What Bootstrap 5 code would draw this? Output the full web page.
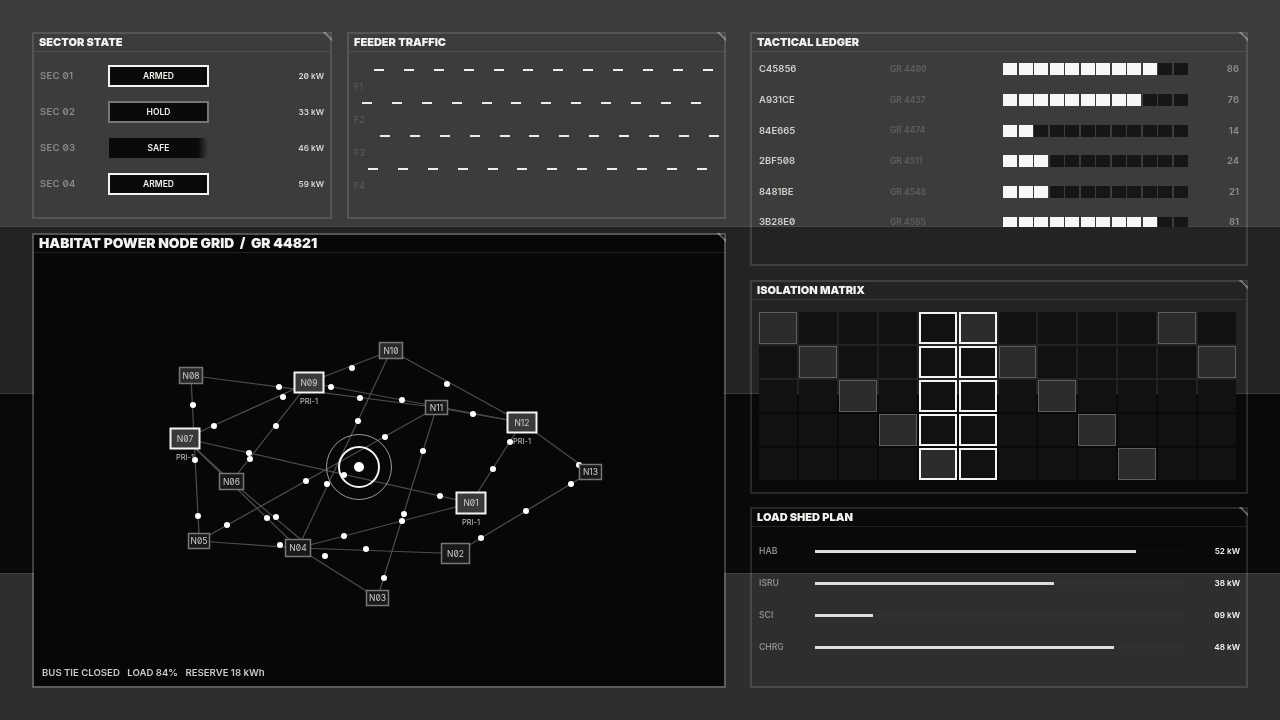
<!DOCTYPE html>
<html lang="en"><head><meta charset="utf-8"><title>Habitat Power Node Grid</title>
<link href="https://cdn.jsdelivr.net/npm/bootstrap@5.3.0/dist/css/bootstrap.min.css" rel="stylesheet">
<style>
html,body{height:720px;overflow:hidden}
body{font-family:Inter,"Liberation Sans",sans-serif;font-variant-numeric:slashed-zero;color:#f2f2f0;
background:linear-gradient(180deg,#3c3d3b 0 226px,#4a4b49 226px 227px,#232422 227px 393px,#3a3b39 393px 394px,#090a08 394px 573px,#3f403e 573px 574px,#2e2f2d 574px 720px)}
.hud{width:1216px;height:656px;margin:32px 32px 0;gap:24px;will-change:transform}
.hud-left{width:694px;gap:14px}
.hud-right{width:498px;gap:14px}
.hud-top{height:187px;gap:15px}
.pane{position:relative;border:2px solid rgba(255,255,255,.13);display:flex;flex-direction:column;min-height:0}
.pane::after{content:"";position:absolute;top:-2px;right:-2px;width:9px;height:9px;background:linear-gradient(45deg,transparent 0 46%,rgba(255,255,255,.3) 46% 62%,transparent 62%)}
.pane-dark{background:#060706;background-clip:padding-box;border-color:rgba(255,255,255,.22)}
.pane-head{height:18px;padding:0 5px;border-bottom:1px solid rgba(255,255,255,.1);font-size:11px;line-height:17px;font-weight:900;white-space:nowrap;flex:none}
.pane-head-lg{font-size:13.8px}
.w-sector{width:300px}.w-feed{width:379px}
.sector-body{padding:6px 6px 0}
.sector-row{height:36px;font-size:8.2px;font-weight:600}
.sec-name{width:68px;color:#8b8c8a;font-size:9.5px;letter-spacing:.3px}
.sec-state{width:101px;height:22px;background:#0a0b09;border:2px solid #0a0b09;text-align:center;font-size:8.5px;line-height:18px;font-weight:600;color:#efefed}
.st-armed{border-color:#f4f4f2}
.st-hold{border-color:#777876}
.st-safe{background:linear-gradient(90deg,#0a0b09 90%,#3c3d3b);background-clip:padding-box;border:1px solid transparent;line-height:20px}
.sec-val{margin-left:auto;color:#d6d6d4}
.feed-body{padding:16.5px 5px 0}
.lane{height:33.3px}
.dash{height:2px;background:repeating-linear-gradient(90deg,#ececea 0 10px,transparent 10px 29.9px)}
.lane-lbl{font-size:9px;line-height:10px;color:#5c5d5b;margin-top:11px}
.ledger-body{height:175px;overflow:hidden;padding:2px 7px 0;flex:none}
.led-row{height:30.67px;font-size:9.5px;font-weight:600;flex:none}
.led-id{width:131px;color:#cfcfcd}
.led-gr{width:113px;color:#5f605e;font-size:8.5px}
.led-cells{gap:1.55px}
.led-cell{width:14px;height:12px;background:#161715}
.led-on{background:#f7f7f5}
.led-val{margin-left:auto;color:#8d8e8c}
.w-ledger{height:234px}.w-matrix{height:214px;margin-bottom:-1px}
.matrix{display:grid;grid-template-columns:repeat(12,1fr);grid-auto-rows:32px;gap:2px;padding:12px 10px 0 7px}
.mx{background:#111210;border:1px solid transparent}
.mx-g{background:#2c2d2b;border:1px solid #5f605e}
.mx-w{border:2px solid #f4f4f2}
.mx-wf{background:#2c2d2b}
.load-body{padding:8px 6px 0 7px}
.load-row{height:32px;font-size:8.2px;font-weight:600;line-height:12px}
.load-name{width:56px;color:#8b8c8a;font-size:8.6px}
.load-track{width:367px;height:3px;background:rgba(255,255,255,.02)}
.load-fill{height:3px;background:#dededc}
.load-val{margin-left:auto;color:#f2f2f0}
.map-wrap{flex:1;min-height:0}
.map-wrap svg{display:block}
.map-foot{font-size:9.6px;line-height:12px;font-weight:600;color:#c9c9c7;padding:0 8px 7px;gap:7.5px;white-space:nowrap}
svg text{font-family:Inter,"Liberation Sans",sans-serif;font-variant-numeric:slashed-zero}
.ln{stroke:#4d4e4c;stroke-width:1.2;fill:none}
.nd{fill:#191a18;stroke:#777876;stroke-width:1.5}
.nd-p{fill:#3a3b39;stroke:#f4f4f2;stroke-width:2}
.nd-m{fill:#2a2b29}
.nt{font-size:8.5px;fill:#cfcfcd;text-anchor:middle;dominant-baseline:central}
.pt{font-size:7.5px;fill:#c4c4c2;text-anchor:middle;dominant-baseline:central}
.dt{fill:#fff}
</style></head>
<body>
<main class="hud d-flex">
 <div class="hud-left d-flex flex-column">
  <div class="hud-top d-flex">
   <section class="pane w-sector">
    <div class="pane-head">SECTOR STATE</div>
    <div class="sector-body">
     <div class="sector-row d-flex align-items-center"><span class="sec-name">SEC 01</span><span class="sec-state st-armed">ARMED</span><span class="sec-val">20 kW</span></div>
     <div class="sector-row d-flex align-items-center"><span class="sec-name">SEC 02</span><span class="sec-state st-hold">HOLD</span><span class="sec-val">33 kW</span></div>
     <div class="sector-row d-flex align-items-center"><span class="sec-name">SEC 03</span><span class="sec-state st-safe">SAFE</span><span class="sec-val">46 kW</span></div>
     <div class="sector-row d-flex align-items-center"><span class="sec-name">SEC 04</span><span class="sec-state st-armed">ARMED</span><span class="sec-val">59 kW</span></div>
    </div>
   </section>
   <section class="pane w-feed">
    <div class="pane-head">FEEDER TRAFFIC</div>
    <div class="feed-body">
     <div class="lane"><div class="dash" style="margin-left:20px;width:339px"></div><div class="lane-lbl">F1</div></div>
     <div class="lane"><div class="dash" style="margin-left:8px;width:339px"></div><div class="lane-lbl">F2</div></div>
     <div class="lane"><div class="dash" style="margin-left:26px;width:339px"></div><div class="lane-lbl">F3</div></div>
     <div class="lane"><div class="dash" style="margin-left:14px;width:339px"></div><div class="lane-lbl">F4</div></div>
    </div>
   </section>
  </div>
  <section class="pane pane-dark flex-grow-1">
   <div class="pane-head pane-head-lg">HABITAT POWER NODE GRID &nbsp;/&nbsp; GR 44821</div>
   <div class="map-wrap">
    <svg id="map" width="690" height="405" viewBox="34 253 690 405" role="img" aria-label="Node grid">
     <g id="edges"></g><g id="dots"></g>
     <circle cx="359" cy="467" r="32.5" fill="none" stroke="#9a9b99" stroke-width="1"/>
     <circle cx="359" cy="467" r="20" fill="none" stroke="#f4f4f2" stroke-width="2"/>
     <circle cx="359" cy="467" r="5" fill="#fff"/>
     <g id="nodes"></g>
    </svg>
   </div>
   <div class="map-foot d-flex"><span>BUS TIE CLOSED</span><span>LOAD 84%</span><span>RESERVE 18 kWh</span></div>
  </section>
 </div>
 <div class="hud-right d-flex flex-column">
  <section class="pane w-ledger">
   <div class="pane-head">TACTICAL LEDGER</div>
   <div class="ledger-body" id="ledger"></div>
  </section>
  <section class="pane w-matrix">
   <div class="pane-head">ISOLATION MATRIX</div>
   <div class="matrix" id="matrix"></div>
  </section>
  <section class="pane flex-grow-1">
   <div class="pane-head">LOAD SHED PLAN</div>
   <div class="load-body">
    <div class="load-row d-flex align-items-center"><span class="load-name">HAB</span><div class="load-track"><div class="load-fill" style="width:87.5%"></div></div><span class="load-val">52 kW</span></div>
    <div class="load-row d-flex align-items-center"><span class="load-name">ISRU</span><div class="load-track"><div class="load-fill" style="width:65%"></div></div><span class="load-val">38 kW</span></div>
    <div class="load-row d-flex align-items-center"><span class="load-name">SCI</span><div class="load-track"><div class="load-fill" style="width:15.8%"></div></div><span class="load-val">09 kW</span></div>
    <div class="load-row d-flex align-items-center"><span class="load-name">CHRG</span><div class="load-track"><div class="load-fill" style="width:81.5%"></div></div><span class="load-val">48 kW</span></div>
   </div>
  </section>
 </div>
</main>
<script>
const rows=[["C45856","GR 4400",10,"86"],["A931CE","GR 4437",9,"76"],["84E665","GR 4474",2,"14"],["2BF508","GR 4511",3,"24"],["8481BE","GR 4548",3,"21"],["3B28E0","GR 4585",10,"81"]];
document.getElementById('ledger').innerHTML=rows.map(r=>{let c='';for(let i=0;i<12;i++)c+='<span class="led-cell'+(i<r[2]?' led-on':'')+'"></span>';
return '<div class="led-row d-flex align-items-center"><span class="led-id">'+r[0]+'</span><span class="led-gr">'+r[1]+'</span><span class="led-cells d-flex">'+c+'</span><span class="led-val">'+r[3]+'</span></div>';}).join('');
const gray=new Set(["0,0","0,10","1,1","1,6","1,11","2,2","2,7","3,3","3,8","4,9"]);let mx='';
for(let r=0;r<5;r++)for(let c=0;c<12;c++){let k='mx';if(c==4||c==5){k+=' mx-w';if((r==0&&c==5)||(r==4&&c==4))k+=' mx-wf';}else if(gray.has(r+','+c))k+=' mx-g';mx+='<div class="'+k+'"></div>';}
document.getElementById('matrix').innerHTML=mx;
const N={N01:[471,503,30,22,1],N02:[455.5,553.5,29,21],N03:[377.5,598,23,16],N04:[298,548,26,18],N05:[199,541,22,16],N06:[231.5,481.5,25,17],N07:[185,438.5,30,21,1],N08:[191,375.5,24,17,0,1],N09:[309,382.5,30,21,1],N10:[391,350.5,24,17,0,1],N11:[436.5,407.5,23,15],N12:[522,422.5,30,21,1],N13:[590.5,472,23,16]};
const E=["N08-N11","N07-N09","N07-N06","N07-N04","N07-N01","N09-N06","N09-N10","N09-N12","N10-N12","N11-N12","N12-N13","N12-N01","N05-N11","N04-N10","N04-N01","N04-N02","N04-N05","N04-N03","N03-N11","N02-N13"];
const X=[[191,376,194,438],[194,438,199.4,541],[232,482,311,548]];
const D=[[193,405],[214,426],[283,397],[279,387],[352,368],[331,387],[360,398],[402,400],[473,414],[447,384],[385,437],[358,421],[276,426],[249,453],[250,459],[195,460],[198,516],[227,525],[306,481],[327,484],[344,475],[440,496],[423,451],[510,442],[493,469],[579,465],[571,484],[526,511],[481,538],[404,514],[402,521],[344,536],[366,549],[280,545],[325,556],[267,518],[276,517],[384,578]];
const s=(g,h)=>document.getElementById(g).innerHTML=h;
s('edges',E.map(e=>{const[a,b]=e.split('-');return `<line class="ln" x1="${N[a][0]}" y1="${N[a][1]}" x2="${N[b][0]}" y2="${N[b][1]}"/>`}).join('')+X.map(l=>`<line class="ln" x1="${l[0]}" y1="${l[1]}" x2="${l[2]}" y2="${l[3]}"/>`).join(''));
s('dots',D.map(d=>`<circle class="dt" cx="${d[0]}" cy="${d[1]}" r="3"/>`).join(''));
s('nodes',Object.entries(N).map(([k,n])=>`<rect class="nd${n[4]?' nd-p':''}${n[5]?' nd-m':''}" x="${n[0]-n[2]/2+.5}" y="${n[1]-n[3]/2+.5}" width="${n[2]-1}" height="${n[3]-1}"/><text class="nt" x="${n[0]}" y="${n[1]}">${k}</text>`+(n[4]?`<text class="pt" x="${n[0]}" y="${n[1]+n[3]/2+8.5}">PRI-1</text>`:'')).join(''));
</script>
</body></html>
